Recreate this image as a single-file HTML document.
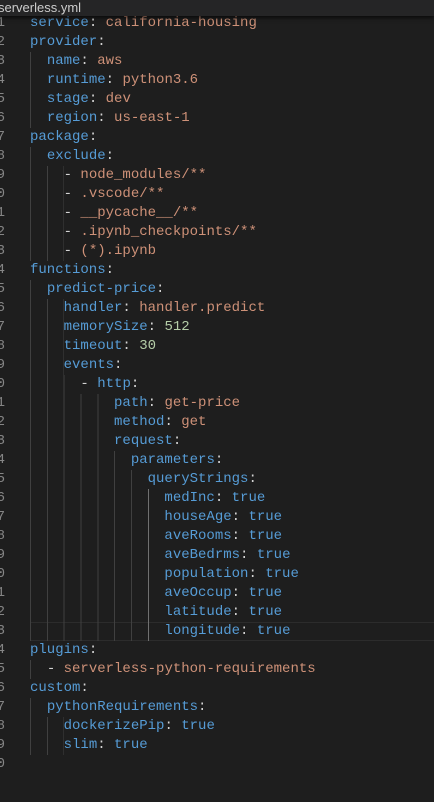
<!DOCTYPE html>
<html><head><meta charset="utf-8"><style>
html,body{margin:0;padding:0;background:#1e1e1e;width:434px;height:802px;overflow:hidden}
#tab{position:absolute;left:0;top:0;width:434px;height:16px;background:#252526;z-index:3;box-shadow:0 2px 4px #000a;font:13px "Liberation Sans",sans-serif;color:#cccccc;line-height:15px}
#tab span{position:relative;left:-2px}
#code{position:absolute;left:30px;top:13.5px;font:14px/19px "Liberation Mono",monospace;white-space:pre;color:#d4d4d4}
#nums{position:absolute;left:-30px;top:13.5px;width:35px;text-align:right;font:14px/19px "Liberation Mono",monospace;color:#858585;white-space:pre}
.l{height:19px}
.i{display:inline-block;height:19px;vertical-align:top;background:repeating-linear-gradient(90deg,#404040 0,#404040 1px,transparent 1px,transparent 16.84px)}
.k{color:#569cd6}.s{color:#ce9178}.n{color:#b5cea8}
#cur{position:absolute;left:30px;top:621.5px;width:404px;height:17px;border-top:1px solid #2c2c2c;border-bottom:1px solid #2c2c2c}
#act{position:absolute;left:148px;top:488.5px;width:1px;height:152px;background:#707070;z-index:2}
</style></head><body>
<div id="tab"><span>serverless.yml</span></div>
<div id="cur"></div>
<div id="act"></div>
<div id="nums">1
2
3
4
5
6
7
8
9
0
1
2
3
4
5
6
7
8
9
0
1
2
3
4
5
6
7
8
9
0
1
2
3
4
5
6
7
8
9
0</div>
<div id="code"><div class="l"><span class="k">service</span>: <span class="s">california-housing</span></div><div class="l"><span class="k">provider</span>:</div><div class="l"><span class="i">  </span><span class="k">name</span>: <span class="s">aws</span></div><div class="l"><span class="i">  </span><span class="k">runtime</span>: <span class="s">python3.6</span></div><div class="l"><span class="i">  </span><span class="k">stage</span>: <span class="s">dev</span></div><div class="l"><span class="i">  </span><span class="k">region</span>: <span class="s">us-east-1</span></div><div class="l"><span class="k">package</span>:</div><div class="l"><span class="i">  </span><span class="k">exclude</span>:</div><div class="l"><span class="i">    </span>- <span class="s">node_modules/**</span></div><div class="l"><span class="i">    </span>- <span class="s">.vscode/**</span></div><div class="l"><span class="i">    </span>- <span class="s">__pycache__/**</span></div><div class="l"><span class="i">    </span>- <span class="s">.ipynb_checkpoints/**</span></div><div class="l"><span class="i">    </span>- <span class="s">(*).ipynb</span></div><div class="l"><span class="k">functions</span>:</div><div class="l"><span class="i">  </span><span class="k">predict-price</span>:</div><div class="l"><span class="i">    </span><span class="k">handler</span>: <span class="s">handler.predict</span></div><div class="l"><span class="i">    </span><span class="k">memorySize</span>: <span class="n">512</span></div><div class="l"><span class="i">    </span><span class="k">timeout</span>: <span class="n">30</span></div><div class="l"><span class="i">    </span><span class="k">events</span>:</div><div class="l"><span class="i">      </span>- <span class="k">http</span>:</div><div class="l"><span class="i">          </span><span class="k">path</span>: <span class="s">get-price</span></div><div class="l"><span class="i">          </span><span class="k">method</span>: <span class="s">get</span></div><div class="l"><span class="i">          </span><span class="k">request</span>:</div><div class="l"><span class="i">            </span><span class="k">parameters</span>:</div><div class="l"><span class="i">              </span><span class="k">queryStrings</span>:</div><div class="l"><span class="i">                </span><span class="k">medInc</span>: <span class="k">true</span></div><div class="l"><span class="i">                </span><span class="k">houseAge</span>: <span class="k">true</span></div><div class="l"><span class="i">                </span><span class="k">aveRooms</span>: <span class="k">true</span></div><div class="l"><span class="i">                </span><span class="k">aveBedrms</span>: <span class="k">true</span></div><div class="l"><span class="i">                </span><span class="k">population</span>: <span class="k">true</span></div><div class="l"><span class="i">                </span><span class="k">aveOccup</span>: <span class="k">true</span></div><div class="l"><span class="i">                </span><span class="k">latitude</span>: <span class="k">true</span></div><div class="l"><span class="i">                </span><span class="k">longitude</span>: <span class="k">true</span></div><div class="l"><span class="k">plugins</span>:</div><div class="l"><span class="i">  </span>- <span class="s">serverless-python-requirements</span></div><div class="l"><span class="k">custom</span>:</div><div class="l"><span class="i">  </span><span class="k">pythonRequirements</span>:</div><div class="l"><span class="i">    </span><span class="k">dockerizePip</span>: <span class="k">true</span></div><div class="l"><span class="i">    </span><span class="k">slim</span>: <span class="k">true</span></div><div class="l"> </div></div>
</body></html>
